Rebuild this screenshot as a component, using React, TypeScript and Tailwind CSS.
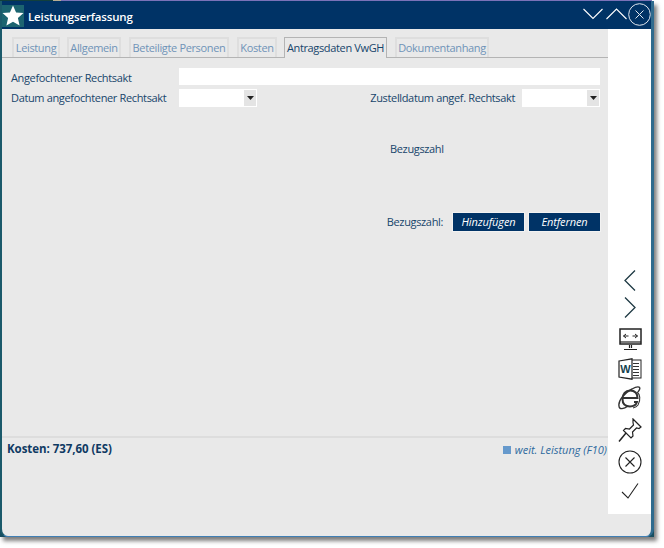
import React from "react";

const tabs = [
  { t: "Leistung", w: "w-[48px]", m: "ml-0" },
  { t: "Allgemein", w: "w-[54px]", m: "ml-[7px]" },
  { t: "Beteiligte Personen", w: "w-[100px]", m: "ml-[8px]" },
  { t: "Kosten", w: "w-[40px]", m: "ml-[8px]" },
  { t: "Antragsdaten VwGH", w: "w-[103px]", m: "ml-[7px]" },
  { t: "Dokumentanhang", w: "w-[94px]", m: "ml-[8px]" },
];

function Select({ w }: { w: string }) {
  return (
    <div className={`${w} h-[18px] bg-white flex justify-end items-center pr-[1px]`}>
      <div className="w-[12px] h-[16px] bg-[#e4e4e4] flex items-center justify-center">
        <svg width="7" height="4" viewBox="0 0 7 4"><path d="M0 0h7L3.500 4z" fill="#222" /></svg>
      </div>
    </div>
  );
}

const stroke = { fill: "none", stroke: "#1f3a44", strokeWidth: 1.3 };

function Side() {
  return (
    <div className="w-[43px] bg-white flex flex-col items-center justify-end pb-[15px] shrink-0 h-[485px]">
      <svg width="12" height="21" viewBox="0 0 12 21" className="mb-[6px]"><path d="M11 0.500 1 10.500l10 10" {...stroke} /></svg>
      <svg width="12" height="21" viewBox="0 0 12 21" className="mb-[10px]"><path d="M1 0.500l10 10-10 10" {...stroke} /></svg>
      <svg width="23" height="23" viewBox="0 0 23 23" className="mb-[7px] ml-[1px]">
        <rect x="1" y="1" width="21" height="15" fill="none" stroke="#222" strokeWidth="1.500" />
        <path d="M1 14h21" stroke="#222" strokeWidth="1.200" />
        <path d="M4.500 8h5M4.500 8l2.500-2M4.500 8l2.500 2M18.500 8h-5M18.500 8l-2.500-2M18.500 8l-2.500 2" fill="none" stroke="#222" strokeWidth="1" />
        <path d="M10.500 17v3M12.500 17v3M5 21.500h13" stroke="#222" strokeWidth="1.200" />
      </svg>
      <svg width="24" height="22" viewBox="0 0 24 22" className="mb-[6px] ml-[1px]">
        <rect x="11" y="2" width="12" height="18" fill="#fff" stroke="#222" strokeWidth="1" />
        <path d="M15 5.500h6M15 8.500h6M15 11.500h6M15 14.500h6M15 17.500h6" stroke="#333" strokeWidth="1" />
        <path d="M1 3 14 0.800v20.400L1 19z" fill="#fff" stroke="#222" strokeWidth="1.200" />
        <text x="7.500" y="15" textAnchor="middle" fontFamily="Liberation Sans" fontWeight="700" fontSize="11" fill="#14424f">W</text>
      </svg>
      <svg width="24" height="24" viewBox="0 0 24 24" className="mb-[8px] ml-[1px]">
        <path d="M20 6C24 1 21-1 14 3 6 7 0 15 1 20c0 4 5 3 9 0" fill="none" stroke="#333" strokeWidth="1.400" />
        <path d="M5 12h14.500c0-5-3-7.500-7.500-7.500S4.500 8 4.500 13 7.500 20.500 12 20.500c3.500 0 6-1.500 7-4.500h-3" fill="none" stroke="#333" strokeWidth="2" />
        <path d="M19 6c3 2 4 8 1 13-1.500 2-3 2.500-5 3" fill="none" stroke="#333" strokeWidth="1.100" />
      </svg>
      <svg width="24" height="24" viewBox="0 0 24 24" className="mb-[8px]">
        <path d="M15 1l8 8-2 1.500-2.500-.5-4 4 .5 4-2 2-7.500-7.500 2-2 4 .5 4-4-.5-2.500z" fill="none" stroke="#222" strokeWidth="1.200" />
        <path d="M8 15 1 23.500" stroke="#222" strokeWidth="1.500" />
      </svg>
      <svg width="24" height="24" viewBox="0 0 24 24" className="mb-[9px]">
        <circle cx="12" cy="12" r="11" fill="none" stroke="#222" strokeWidth="1.100" />
        <path d="M7.500 7.500l9 9M16.500 7.500l-9 9" stroke="#222" strokeWidth="1.100" />
      </svg>
      <svg width="18" height="16" viewBox="0 0 18 16"><path d="M1 9l6 6L17 0.500" fill="none" stroke="#222" strokeWidth="1.100" /></svg>
    </div>
  );
}

export default function App() {
  return (
    <div className="w-[664px] h-[548px] bg-white overflow-hidden" style={{ fontFamily: '"Open Sans", sans-serif' }}>
      <div className="flex h-[1px] w-[652px]">
        <div className="w-[53px] bg-[#123f3c]" />
        <div className="w-[8px] bg-[#b9ae93]" />
        <div className="flex-1 bg-[#7a72b8]" />
      </div>
      <div className="w-[654px] h-[536px] bg-[#174e60] shadow-[3px_4px_4px_rgba(0,0,0,0.5)]">
        <div className="w-full h-full flex flex-col bg-[#e9e9e9] border-l-[2px] border-r-[3px] border-b-[1px] border-l-[#1b5a6b] border-r-[#2f6b8e] border-b-[#3f7fb5] rounded-bl-[8px] rounded-br-[8px] overflow-hidden">
          <div className="h-[28px] bg-[#003366] flex items-center shrink-0">
            <div className="w-[22px] h-[22px] bg-[#1c6470] flex items-center justify-center mt-[1px]">
              <svg width="22" height="22" viewBox="0 0 22 22"><path d="M11 0.500l3.100 7 7.400.6-5.600 5 1.700 7.500L11 16.700 4.400 20.600l1.700-7.500-5.600-5 7.400-.6z" fill="#fff" /></svg>
            </div>
            <span className="ml-[4px] mt-[4px] text-white text-[11.500px] tracking-[-0.15px] font-semibold">Leistungserfassung</span>
            <div className="ml-auto flex items-center mr-0">
              <svg width="20" height="12" viewBox="0 0 20 12" className="-mt-[3px]"><path d="M0.500 1l9.500 9.500L19.500 1" fill="none" stroke="#fff" strokeWidth="1.100" /></svg>
              <svg width="21" height="12" viewBox="0 0 21 12" className="ml-[3px] -mt-[3px]"><path d="M0.500 11 10.500 1l10 10" fill="none" stroke="#fff" strokeWidth="1.100" /></svg>
              <svg width="23" height="23" viewBox="0 0 23 23" className="ml-[1px] -mt-[2px]">
                <circle cx="11.500" cy="11.500" r="10.800" fill="none" stroke="#dfe6ee" strokeWidth="1" />
                <path d="M7.500 7.500l8 8M15.500 7.500l-8 8" stroke="#dfe6ee" strokeWidth="1" />
              </svg>
            </div>
          </div>
          <div className="flex flex-1 min-h-0 items-start">
            <div className="flex-1 min-w-0 h-full flex flex-col">
              <div className="flex pl-[10px] h-[29px] border-b border-[#b4b4b4] shrink-0 items-end text-[11px] tracking-[-0.35px]">
                {tabs.map(({ t, w, m }, i) =>
                  i === 4 ? (
                    <div key={t} className={`${w} ${m} h-[21px] -mb-[1px] bg-[#e9e9e9] border border-b-0 border-[#b4b4b4] text-[#17456b] text-center leading-[20px] whitespace-nowrap`}>{t}</div>
                  ) : (
                    <div key={t} className={`${w} ${m} h-[20px] bg-[#e9e9e9] border-[2px] border-b-0 border-[#dedede] text-[#6f93b8] text-center leading-[18px] whitespace-nowrap`}>{t}</div>
                  )
                )}
              </div>
              <div className="flex-1 flex flex-col pl-[9px] pr-[8px] pt-[10px] text-[#17456b] text-[11px] tracking-[-0.35px]">
                <div className="flex items-center h-[17px]">
                  <span className="w-[168px] mt-[3px]">Angefochtener Rechtsakt</span>
                  <div className="flex-1 h-[17px] bg-white" />
                </div>
                <div className="flex items-center h-[18px] mt-[4px]">
                  <span className="w-[168px] whitespace-nowrap">Datum angefochtener Rechtsakt</span>
                  <Select w="w-[78px]" />
                  <span className="ml-auto mr-[7px] whitespace-nowrap">Zustelldatum angef. Rechtsakt</span>
                  <Select w="w-[78px]" />
                </div>
                <div className="pl-[379px] mt-[34px] leading-[16px]">Bezugszahl</div>
                <div className="flex justify-end items-center mt-[56px] h-[18px]">
                  <span className="mr-[10px]">Bezugszahl:</span>
                  <div className="w-[71px] h-[18px] bg-[#003366] text-white italic text-center leading-[18px] mr-[5px] tracking-[-0.1px] outline outline-1 outline-[#f2f2f2]">Hinzufügen</div>
                  <div className="w-[71px] h-[18px] bg-[#003366] text-white italic text-center leading-[18px] tracking-[-0.1px] outline outline-1 outline-[#f2f2f2]">Entfernen</div>
                </div>
              </div>
              <div className="h-[100px] shrink-0 border-t-[2px] border-[#dddddd] pl-[5px] pr-[1px] pt-[2px] flex justify-between items-start text-[#17456b]">
                <span className="font-bold text-[11.500px] tracking-[-0.05px] text-[#0f3a63]">Kosten: 737,60 (ES)</span>
                <span className="flex items-center italic text-[11px] text-[#2f6a9e] mt-[2px]">
                  <span className="w-[8px] h-[8px] bg-[#6699cc] mr-[4px]" />
                  weit. Leistung (F10)
                </span>
              </div>
            </div>
            <Side />
          </div>
        </div>
      </div>
    </div>
  );
}
